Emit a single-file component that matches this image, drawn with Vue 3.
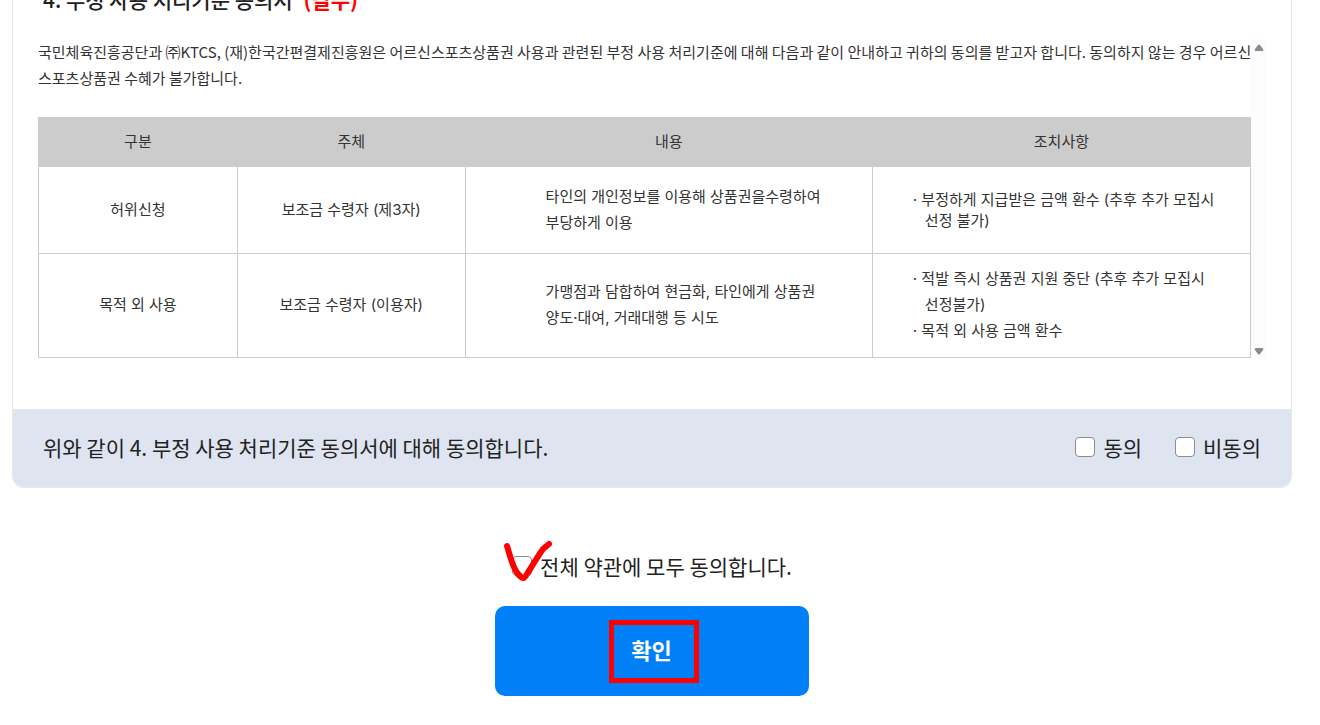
<template>
  <main class="terms-page">
    <section class="terms-card">
      <h2 class="terms-title">4. 부정 사용 처리기준 동의서 <em class="required">(필수)</em></h2>

      <div class="terms-box">
        <div class="terms-content">
          <p class="terms-intro">
            국민체육진흥공단과 ㈜KTCS, (재)한국간편결제진흥원은 어르신스포츠상품권 사용과 관련된 부정 사용 처리기준에 대해 다음과 같이 안내하고 귀하의 동의를 받고자 합니다. 동의하지 않는 경우 어르신스포츠상품권 수혜가 불가합니다.
          </p>
          <table class="rule-table">
            <colgroup>
              <col class="col-type" />
              <col class="col-subject" />
              <col class="col-content" />
              <col class="col-action" />
            </colgroup>
            <thead>
              <tr>
                <th v-for="name in columns" :key="name" scope="col">{{ name }}</th>
              </tr>
            </thead>
            <tbody>
              <tr v-for="rule in rules" :key="rule.type">
                <td>{{ rule.type }}</td>
                <td>{{ rule.subject }}</td>
                <td class="cell-content">
                  <div v-for="line in rule.content" :key="line">{{ line }}</div>
                </td>
                <td class="cell-action" :class="{ compact: rule.compact }">
                  <div v-for="action in rule.actions" :key="action[0]" class="action">
                    · {{ action[0] }}
                    <div v-if="action[1]" class="action-rest">{{ action[1] }}</div>
                  </div>
                </td>
              </tr>
            </tbody>
          </table>
        </div>
        <!-- 스크롤바 -->
        <div class="scroll-track" aria-hidden="true">
          <svg class="arrow" viewBox="0 0 10 8"><path d="M4 1Q5 0 6 1L9 5Q10 7 8 7H2Q0 7 1 5Z" /></svg>
          <svg class="arrow" viewBox="0 0 10 8"><path d="M4 7Q5 8 6 7L9 3Q10 1 8 1H2Q0 1 1 3Z" /></svg>
        </div>
      </div>

      <div class="agree-bar">
        <p class="agree-text">위와 같이 4. 부정 사용 처리기준 동의서에 대해 동의합니다.</p>
        <div class="agree-options">
          <label class="check"><input v-model="agree" type="checkbox" />동의</label>
          <label class="check"><input v-model="disagree" type="checkbox" />비동의</label>
        </div>
      </div>
    </section>

    <!-- 전체 동의 -->
    <div class="agree-all">
      <label class="check"><input v-model="agreeAll" type="checkbox" />전체 약관에 모두 동의합니다.</label>
      <svg class="hand-check" viewBox="0 0 50 42" aria-hidden="true">
        <path d="M4 6C6 12 7 17 9 22C11 28 14 34 18 37C20 39 22 38 24 34C29 26 35 16 40 9L46 4" />
      </svg>
    </div>

    <button type="button" class="confirm-btn">
      <span class="confirm-label">확인</span>
    </button>
  </main>
</template>

<script setup>
import { ref } from 'vue'

const agree = ref(false)
const disagree = ref(false)
const agreeAll = ref(false)

const columns = ['구분', '주체', '내용', '조치사항']

const rules = [
  {
    type: '허위신청',
    subject: '보조금 수령자 (제3자)',
    content: ['타인의 개인정보를 이용해 상품권을수령하여', '부당하게 이용'],
    actions: [['부정하게 지급받은 금액 환수 (추후 추가 모집시', '선정 불가)']],
    compact: true
  },
  {
    type: '목적 외 사용',
    subject: '보조금 수령자 (이용자)',
    content: ['가맹점과 담합하여 현금화, 타인에게 상품권', '양도·대여, 거래대행 등 시도'],
    actions: [['적발 즉시 상품권 지원 중단 (추후 추가 모집시', '선정불가)'], ['목적 외 사용 금액 환수']]
  }
]
</script>

<style>
body {
  margin: 0;
  background: #fff;
}
</style>

<style scoped>
.terms-page {
  display: flex;
  flex-direction: column;
  align-items: center;
  max-width: 1280px;
  margin: -21px auto 0;
  padding: 0 28px 28px 12px;
  font-family: "Noto Sans CJK KR", sans-serif;
  font-size: 15px;
  line-height: 26px;
  color: #333;
}

.terms-card {
  box-sizing: border-box;
  width: 100%;
  border: 1px solid #e8e8e8;
  border-top: none;
  border-radius: 0 0 12px 12px;
  overflow: hidden;
}

.terms-title {
  margin: 0 0 20px;
  padding: 0 30px;
  font-size: 21px;
  font-weight: 500;
  line-height: 40px;
  color: #222;
}

.required {
  margin-left: 6px;
  font-style: normal;
  font-weight: 700;
  color: #f00;
}

.terms-box {
  display: flex;
  padding: 0 25px 50px;
}

.terms-content {
  flex: 1;
  min-width: 0;
  padding-bottom: 1px;
}

.terms-intro {
  margin: 0 -4px 26px 0;
  word-break: break-all;
}

.rule-table {
  width: 100%;
  border-collapse: collapse;
  table-layout: fixed;
  font-family: Inter, "Noto Sans CJK KR", sans-serif;
}

.col-type {
  width: 16.4%;
}

.col-subject {
  width: 18.8%;
}

.col-content {
  width: 33.6%;
}

.col-action {
  width: 31.2%;
}

.rule-table th {
  padding: 11px 0;
  border: 1px solid #ccc;
  background: #ccc;
  font-weight: 400;
}

.rule-table td {
  padding: 12px 0 13px;
  height: 61px;
  border: 1px solid #ccc;
  text-align: center;
}

.rule-table .cell-content {
  padding-left: 80px;
  text-align: left;
  white-space: nowrap;
}

.rule-table .cell-action {
  padding-left: 40px;
  text-align: left;
  white-space: nowrap;
}

.compact {
  line-height: 21px;
}

.action-rest {
  padding-left: 12px;
}

.scroll-track {
  display: flex;
  flex-direction: column;
  align-items: center;
  justify-content: space-between;
  width: 15px;
  padding: 5px 0 4px;
  box-sizing: border-box;
  background: #fcfcfc;
}

.arrow {
  width: 10px;
  height: 8px;
  fill: #8b8b8b;
}

.agree-bar {
  display: flex;
  align-items: center;
  justify-content: space-between;
  padding: 18px 30px 20px;
  background: #dee4f0;
  font-size: 21px;
  line-height: 40px;
  color: #222;
}

.agree-text {
  margin: 0;
}

.agree-options {
  display: flex;
  gap: 33px;
}

.check {
  display: flex;
  align-items: center;
  gap: 8px;
}

.check input {
  appearance: none;
  box-sizing: border-box;
  width: 20px;
  height: 20px;
  margin: 0;
  border: 1px solid #8c8c8c;
  border-radius: 4px;
  background: #fff;
}

.check input:checked {
  background: #007ff7;
}

.agree-all {
  position: relative;
  margin-top: 58px;
  font-size: 21px;
  line-height: 40px;
  color: #222;
}

.hand-check {
  position: absolute;
  top: -6px;
  left: -9px;
  width: 50px;
  height: 42px;
  fill: none;
  stroke: #f00;
  stroke-width: 6;
  stroke-linecap: round;
  stroke-linejoin: round;
}

.confirm-btn {
  display: flex;
  align-items: center;
  justify-content: center;
  width: 314px;
  height: 90px;
  margin-top: 20px;
  padding: 0;
  border: none;
  border-radius: 10px;
  background: #007ff7;
  font-family: inherit;
  font-size: 22px;
  font-weight: 700;
  color: #fff;
  cursor: pointer;
}

.confirm-label {
  margin-left: 4px;
  padding: 9px 22px 14px 17px;
  border: 5px solid #f00;
  line-height: 30px;
}
</style>
